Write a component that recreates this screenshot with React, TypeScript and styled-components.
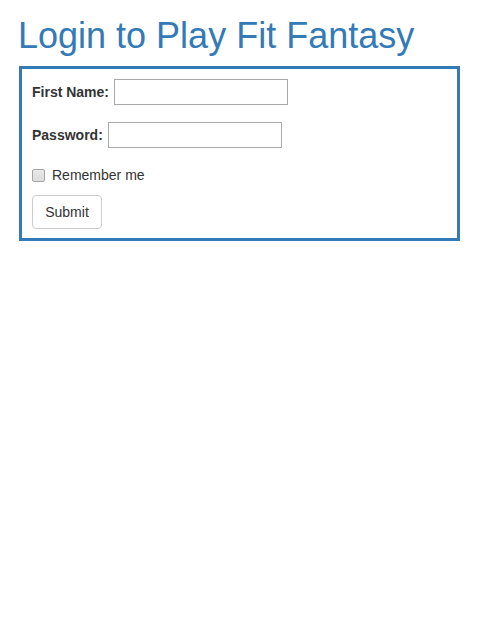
import React from "react";
import styled, { createGlobalStyle } from "styled-components";

const Global = createGlobalStyle`
  html, body { margin: 0; padding: 0; background: #fff; }
  body {
    font-family: "Liberation Sans", Arial, Helvetica, sans-serif;
    font-size: 14px;
    line-height: 1.42857;
    color: #333;
  }
  * { box-sizing: border-box; }
`;

const Page = styled.div`
  padding: 0 19px;
`;

const Title = styled.h1`
  margin: 16px 0 10px -1px;
  font-family: "Liberation Sans", Arial, Helvetica, sans-serif;
  font-size: 36px;
  font-weight: 400;
  line-height: 1.1;
  color: #337ab7;
`;

const Panel = styled.form`
  border: 3px solid #337ab7;
  padding: 10px 10px 9px 10px;
  display: flex;
  flex-direction: column;
  align-items: flex-start;
`;

const FieldRow = styled.div<{ $mb: number }>`
  display: flex;
  align-items: center;
  gap: 5px;
  height: 26px;
  margin-bottom: ${(p) => p.$mb}px;
`;

const Label = styled.label`
  font-weight: 700;
  font-size: 14px;
  color: #333;
  padding-top: 2px;
`;

const TextInput = styled.input`
  width: 174px;
  height: 26px;
  border: 1px solid #a9a9a9;
  padding: 1px 2px;
  font-family: inherit;
  font-size: 13px;
  background: #fff;
  outline: none;
`;

const CheckRow = styled.label`
  display: flex;
  align-items: center;
  height: 20px;
  gap: 7px;
  margin-bottom: 9px;
  font-size: 14px;
  color: #333;
`;

const Check = styled.input`
  appearance: none;
  width: 13px;
  height: 13px;
  margin: 0;
  border: 1px solid #a6a6a6;
  border-radius: 2px;
  background: linear-gradient(#e9e9e9, #dcdcdc);
`;

const Button = styled.button`
  height: 34px;
  width: 70px;
  padding: 6px 12px;
  font-family: inherit;
  font-size: 14px;
  color: #333;
  background: #fff;
  border: 1px solid #ccc;
  border-radius: 4px;
`;

export default function App() {
  return (
    <Page>
      <Global />
      <Title>Login to Play Fit Fantasy</Title>
      <Panel onSubmit={(e) => e.preventDefault()}>
        <FieldRow $mb={17}>
          <Label htmlFor="fn">First Name:</Label>
          <TextInput id="fn" type="text" />
        </FieldRow>
        <FieldRow $mb={18}>
          <Label htmlFor="pw">Password:</Label>
          <TextInput id="pw" type="password" />
        </FieldRow>
        <CheckRow>
          <Check type="checkbox" />
          Remember me
        </CheckRow>
        <Button type="submit">Submit</Button>
      </Panel>
    </Page>
  );
}
